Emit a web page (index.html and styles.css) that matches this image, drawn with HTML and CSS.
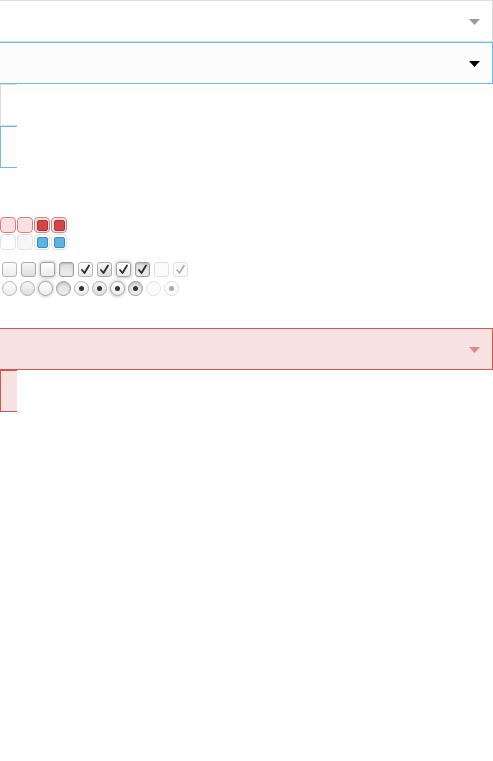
FILE: index.html
```html
<!DOCTYPE html>
<html>
<head>
<meta charset="utf-8">
<link rel="stylesheet" href="styles.css">
</head>
<body>
<div class="page">
  <div class="select plain"><svg class="caret" width="11" height="6" viewBox="0 0 11 6"><polygon points="0,0 11,0 5.5,6" fill="#9a9a9a"/></svg></div>
  <div class="select focus"><svg class="caret" width="11" height="6" viewBox="0 0 11 6"><polygon points="0,0 11,0 5.5,6" fill="#000"/></svg></div>
  <div class="stub plain"></div>
  <div class="stub focus"></div>

  <div class="swatches">
    <div class="sw-row">
      <span class="sw red"></span>
      <span class="sw red"></span>
      <span class="sw red"><span class="fill red-fill"></span></span>
      <span class="sw red"><span class="fill red-fill"></span></span>
    </div>
    <div class="sw-row">
      <span class="sw white"></span>
      <span class="sw grey"></span>
      <span class="sw white"><span class="fill blue-fill"></span></span>
      <span class="sw white"><span class="fill blue-fill"></span></span>
    </div>
  </div>

  <div class="checks">
    <div class="ck-row">
      <span class="cb"></span>
      <span class="cb hover"></span>
      <span class="cb focus"></span>
      <span class="cb active"></span>
      <span class="cb"><svg class="tick" viewBox="0 0 13 13"><path d="M3 7 L5.5 10 L10 2.5" fill="none" stroke="currentColor" stroke-width="1.8" stroke-linecap="round" stroke-linejoin="round"/></svg></span>
      <span class="cb hover"><svg class="tick" viewBox="0 0 13 13"><path d="M3 7 L5.5 10 L10 2.5" fill="none" stroke="currentColor" stroke-width="1.8" stroke-linecap="round" stroke-linejoin="round"/></svg></span>
      <span class="cb focus"><svg class="tick" viewBox="0 0 13 13"><path d="M3 7 L5.5 10 L10 2.5" fill="none" stroke="currentColor" stroke-width="1.8" stroke-linecap="round" stroke-linejoin="round"/></svg></span>
      <span class="cb active"><svg class="tick" viewBox="0 0 13 13"><path d="M3 7 L5.5 10 L10 2.5" fill="none" stroke="currentColor" stroke-width="1.8" stroke-linecap="round" stroke-linejoin="round"/></svg></span>
      <span class="cb disabled"></span>
      <span class="cb disabled"><svg class="tick" viewBox="0 0 13 13"><path d="M3 7 L5.5 10 L10 2.5" fill="none" stroke="currentColor" stroke-width="1.5" stroke-linecap="round" stroke-linejoin="round"/></svg></span>
    </div>
    <div class="rb-row">
      <span class="rb"></span>
      <span class="rb hover"></span>
      <span class="rb focus"></span>
      <span class="rb active"></span>
      <span class="rb"><span class="dot"></span></span>
      <span class="rb hover"><span class="dot"></span></span>
      <span class="rb focus"><span class="dot"></span></span>
      <span class="rb active"><span class="dot"></span></span>
      <span class="rb disabled"></span>
      <span class="rb disabled"><span class="dot"></span></span>
    </div>
  </div>

  <div class="select error"><svg class="caret" width="11" height="6" viewBox="0 0 11 6"><polygon points="0,0 11,0 5.5,6" fill="#d98a8a"/></svg></div>
  <div class="stub error"></div>
</div>
</body>
</html>
```
FILE: styles.css
```css
html, body {
  margin: 0;
  padding: 0;
  background: #fff;
  overflow: hidden;
}
.page {
  display: flex;
  flex-direction: column;
  align-items: flex-start;
  font-family: "Liberation Sans", Arial, sans-serif;
}
.select {
  box-sizing: border-box;
  height: 42px;
  width: 494px;
  margin-left: -1px;
  border: 1px solid #dcdcdc;
  background: #fff;
  display: flex;
  align-items: center;
  justify-content: flex-end;
  padding-right: 12px;
}
.select .caret { display: block; margin-top: 1px; }
.select.focus { border-color: #6cbbe9; background: #fcfcfc; }
.select.error { border-color: #d9534f; background: #f7e2e2; margin-top: 32px; }

.stub {
  box-sizing: border-box;
  height: 42px;
  width: 17px;
  border: 1px solid #dcdcdc;
  border-right: none;
  background: #fff;
}
.stub.focus { border-color: #6cbbe9; background: #fcfcfc; }
.stub.error { border-color: #d9534f; background: #f7e2e2; }

.swatches {
  margin-top: 49px;
  display: flex;
  flex-direction: column;
  gap: 1px;
}
.sw-row { display: flex; gap: 1px; }
.sw {
  box-sizing: border-box;
  width: 16px;
  height: 16px;
  border-radius: 4px;
  border: 1px solid #e0e0e0;
  display: flex;
  align-items: center;
  justify-content: center;
}
.sw.red { background: #fae0e0; border-color: #de7f7f; }
.sw.white { background: #fff; border-color: #e2e2e2; }
.sw.grey { background: #f6f6f6; border-color: #e2e2e2; }
.fill {
  box-sizing: border-box;
  width: 11px;
  height: 11px;
  border-radius: 2px;
}
.red-fill { background: #d64545; border: 1px solid #b23333; }
.blue-fill { background: #5bb4e6; border: 1px solid #3a8cc4; }

.checks {
  margin-top: 12px;
  margin-left: 2px;
  display: flex;
  flex-direction: column;
  gap: 4px;
}
.ck-row { display: flex; gap: 4px; }
.rb-row { display: flex; gap: 3px; }
.cb, .rb {
  box-sizing: border-box;
  width: 15px;
  height: 15px;
  border: 1px solid #b8b8b8;
  background: linear-gradient(#ffffff, #ebebeb);
  display: flex;
  align-items: center;
  justify-content: center;
  color: #2b2b2b;
}
.cb { border-radius: 3px; }
.rb { border-radius: 50%; }
.cb.hover, .rb.hover { background: linear-gradient(#f6f6f6, #dedede); border-color: #ababab; }
.cb.focus, .rb.focus { box-shadow: 0 0 3px 1px rgba(0,0,0,0.2); border-color: #a3a3a3; }
.cb.active, .rb.active { background: linear-gradient(#dcdcdc, #eeeeee); border-color: #9c9c9c; box-shadow: inset 0 1px 2px rgba(0,0,0,0.18); }
.cb.disabled, .rb.disabled { background: #fbfbfb; border-color: #e0e0e0; color: #a8a8a8; }
.tick { width: 13px; height: 13px; display: block; }
.dot {
  width: 5px;
  height: 5px;
  border-radius: 50%;
  background: #333;
}
.rb.disabled .dot { background: #aaa; }
```
